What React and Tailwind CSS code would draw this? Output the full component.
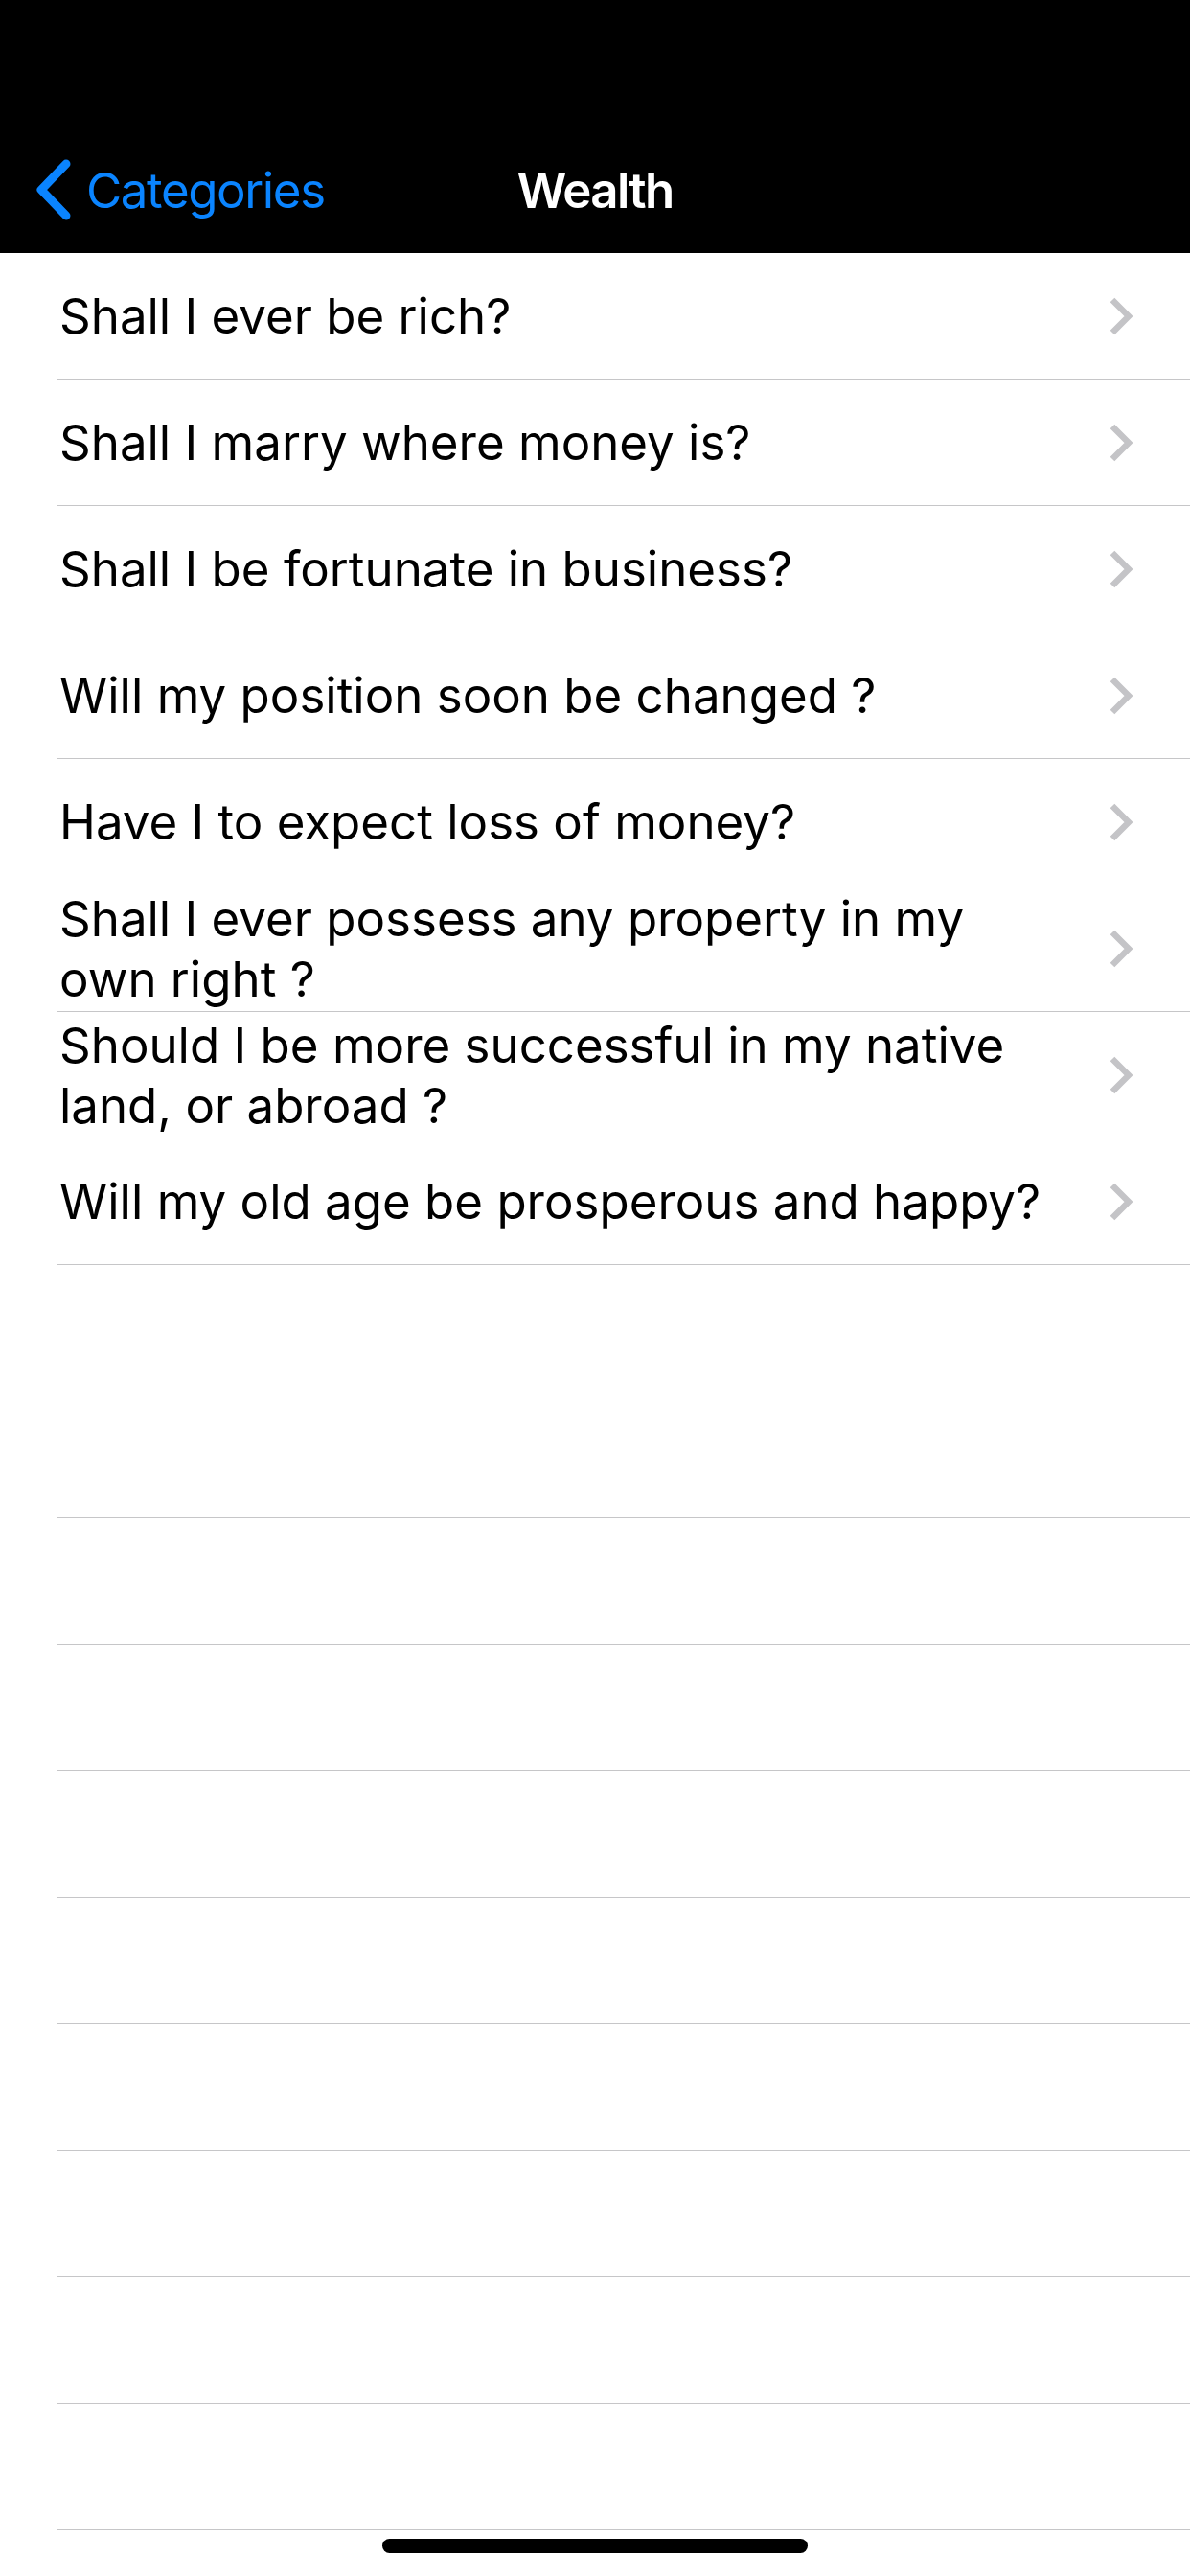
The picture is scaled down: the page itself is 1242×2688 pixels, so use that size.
import React from "react";

const rows = [
  ["Shall I ever be rich?"],
  ["Shall I marry where money is?"],
  ["Shall I be fortunate in business?"],
  ["Will my position soon be changed ?"],
  ["Have I to expect loss of money?"],
  ["Shall I ever possess any property in my", "own right ?"],
  ["Should I be more successful in my native", "land, or abroad ?"],
  ["Will my old age be prosperous and happy?"],
];

function Chevron() {
  return (
    <svg width="24" height="40" viewBox="0 0 24 40" className="shrink-0">
      <polyline
        points="3,3 20,20 3,37"
        fill="none"
        stroke="#c4c4c7"
        strokeWidth="6.5"
        strokeLinecap="butt"
        strokeLinejoin="miter"
      />
    </svg>
  );
}

export default function App() {
  const empty = Array.from({ length: 10 });
  return (
    <div
      className="relative w-[1242px] h-[2688px] bg-white overflow-hidden"
      style={{ fontFamily: "Inter, 'Noto Sans', 'Liberation Sans', sans-serif" }}
    >
      <div className="h-[264px] bg-black flex flex-col">
        <div className="h-[132px]" />
        <div className="h-[132px] grid grid-cols-[1fr_auto_1fr] items-center">
          <div className="flex items-center pl-[36px] gap-[14px]">
            <svg width="40" height="64" viewBox="0 0 40 64" className="shrink-0">
              <polyline
                points="33,5 7,32 33,59"
                fill="none"
                stroke="#0a84ff"
                strokeWidth="9"
                strokeLinecap="round"
                strokeLinejoin="round"
              />
            </svg>
            <span className="text-[51px] leading-none text-[#0a84ff] tracking-[-1.4px]">Categories</span>
          </div>
          <span className="text-[51px] leading-none font-semibold text-white tracking-[-1.6px]">Wealth</span>
          <div />
        </div>
      </div>
      <div className="flex flex-col">
        {rows.map((lines, i) => (
          <div key={i} className="pl-[60px]">
            <div className="h-[132px] border-b border-[#c6c6c8] flex items-center pr-[60px]">
              <div className="flex-1 pl-[2px] text-[51px] leading-[63px] text-black tracking-[0px] whitespace-nowrap">
                {lines.map((l, j) => (
                  <div key={j}>{l}</div>
                ))}
              </div>
              <Chevron />
            </div>
          </div>
        ))}
        {empty.map((_, i) => (
          <div key={"e" + i} className="pl-[60px]">
            <div className="h-[132px] border-b border-[#c6c6c8]" />
          </div>
        ))}
      </div>
      <div className="absolute left-[399px] bottom-[24px] w-[444px] h-[15px] rounded-full bg-black" />
    </div>
  );
}
